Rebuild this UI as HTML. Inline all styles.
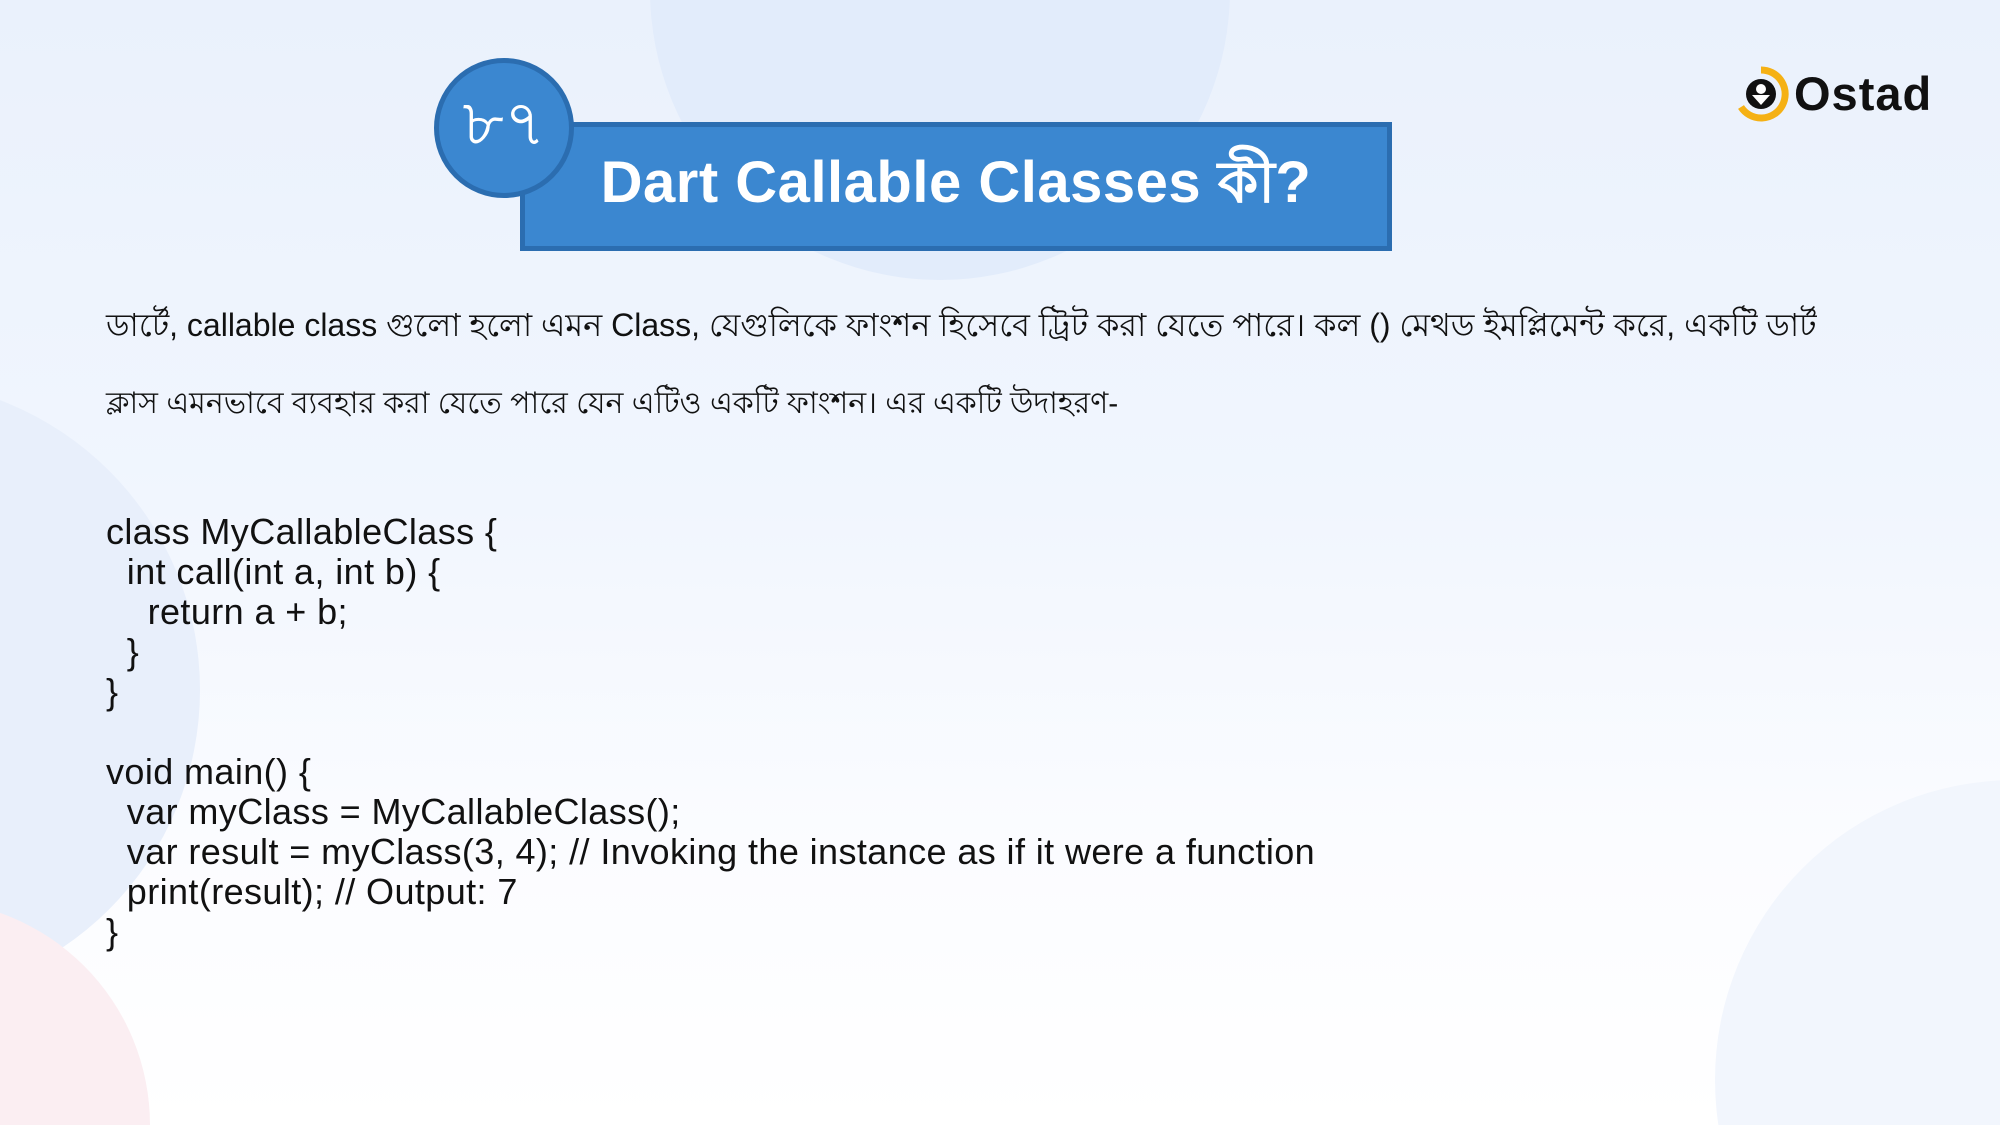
<!DOCTYPE html>
<html><head><meta charset="utf-8"><style>
html,body{margin:0;padding:0;width:2000px;height:1125px;overflow:hidden}
#wrap{width:2000px;height:1125px;position:relative;overflow:hidden;background:linear-gradient(180deg,#eaf1fc 0%,#f1f6fe 45%,#fbfcff 75%,#ffffff 100%);font-family:"Liberation Sans",sans-serif;color:#111}
.dec{position:absolute;border-radius:50%}
.title{position:absolute;left:520px;top:122px;width:872px;height:129px;box-sizing:border-box;background:#3b87d0;border:5px solid #2b6db0;}
.title span{position:absolute;left:0;right:0;top:11px;text-align:center;color:#fff;font-weight:bold;font-size:58px;letter-spacing:0.5px}
.circ{position:absolute;left:434px;top:58px;width:140px;height:140px;box-sizing:border-box;border-radius:50%;background:#3b87d0;border:5px solid #2b6db0;color:#fff;font-size:64px;text-align:center;line-height:120px;z-index:2}
.p{position:absolute;left:106px;font-size:32px;white-space:nowrap}
.code{position:absolute;left:106px;top:512px;font-size:36px;line-height:40px;letter-spacing:0.4px;white-space:pre;margin:0;font-family:"Liberation Sans",sans-serif}
</style></head><body><div id="wrap">
<div class="dec" style="left:650px;top:-300px;width:580px;height:580px;background:#e2ecfb"></div>
<div class="dec" style="left:-420px;top:380px;width:620px;height:620px;background:#e8effb"></div>
<div class="dec" style="left:-300px;top:900px;width:450px;height:450px;background:#fbeef2"></div>
<div class="dec" style="left:1715px;top:780px;width:600px;height:600px;background:#f2f6fd"></div>
<div class="title"><span>Dart Callable Classes কী?</span></div>
<div class="circ">৮৭</div>
<svg style="position:absolute;left:1733px;top:66px" width="56" height="56" viewBox="0 0 56 56">
<path d="M28 4 A24 24 0 1 1 8 41" fill="none" stroke="#f5b114" stroke-width="7"/>
<circle cx="28" cy="28" r="15" fill="#111"/>
<circle cx="28" cy="23" r="5" fill="#fff"/>
<path d="M19 29 L37 29 L28 39 Z" fill="#fff"/>
</svg>
<div style="position:absolute;left:1794px;top:66px;font-size:47px;font-weight:bold;color:#111;letter-spacing:1px">Ostad</div>
<div class="p" style="top:300px">ডার্টে, callable class গুলো হলো এমন Class, যেগুলিকে ফাংশন হিসেবে ট্রিট করা যেতে পারে। কল () মেথড ইমপ্লিমেন্ট করে, একটি ডার্ট</div>
<div class="p" style="top:379px;font-size:30px">ক্লাস এমনভাবে ব্যবহার করা যেতে পারে যেন এটিও একটি ফাংশন। এর একটি উদাহরণ-</div>
<pre class="code">class MyCallableClass {
  int call(int a, int b) {
    return a + b;
  }
}

void main() {
  var myClass = MyCallableClass();
  var result = myClass(3, 4); // Invoking the instance as if it were a function
  print(result); // Output: 7
}</pre>
</div></body></html>
